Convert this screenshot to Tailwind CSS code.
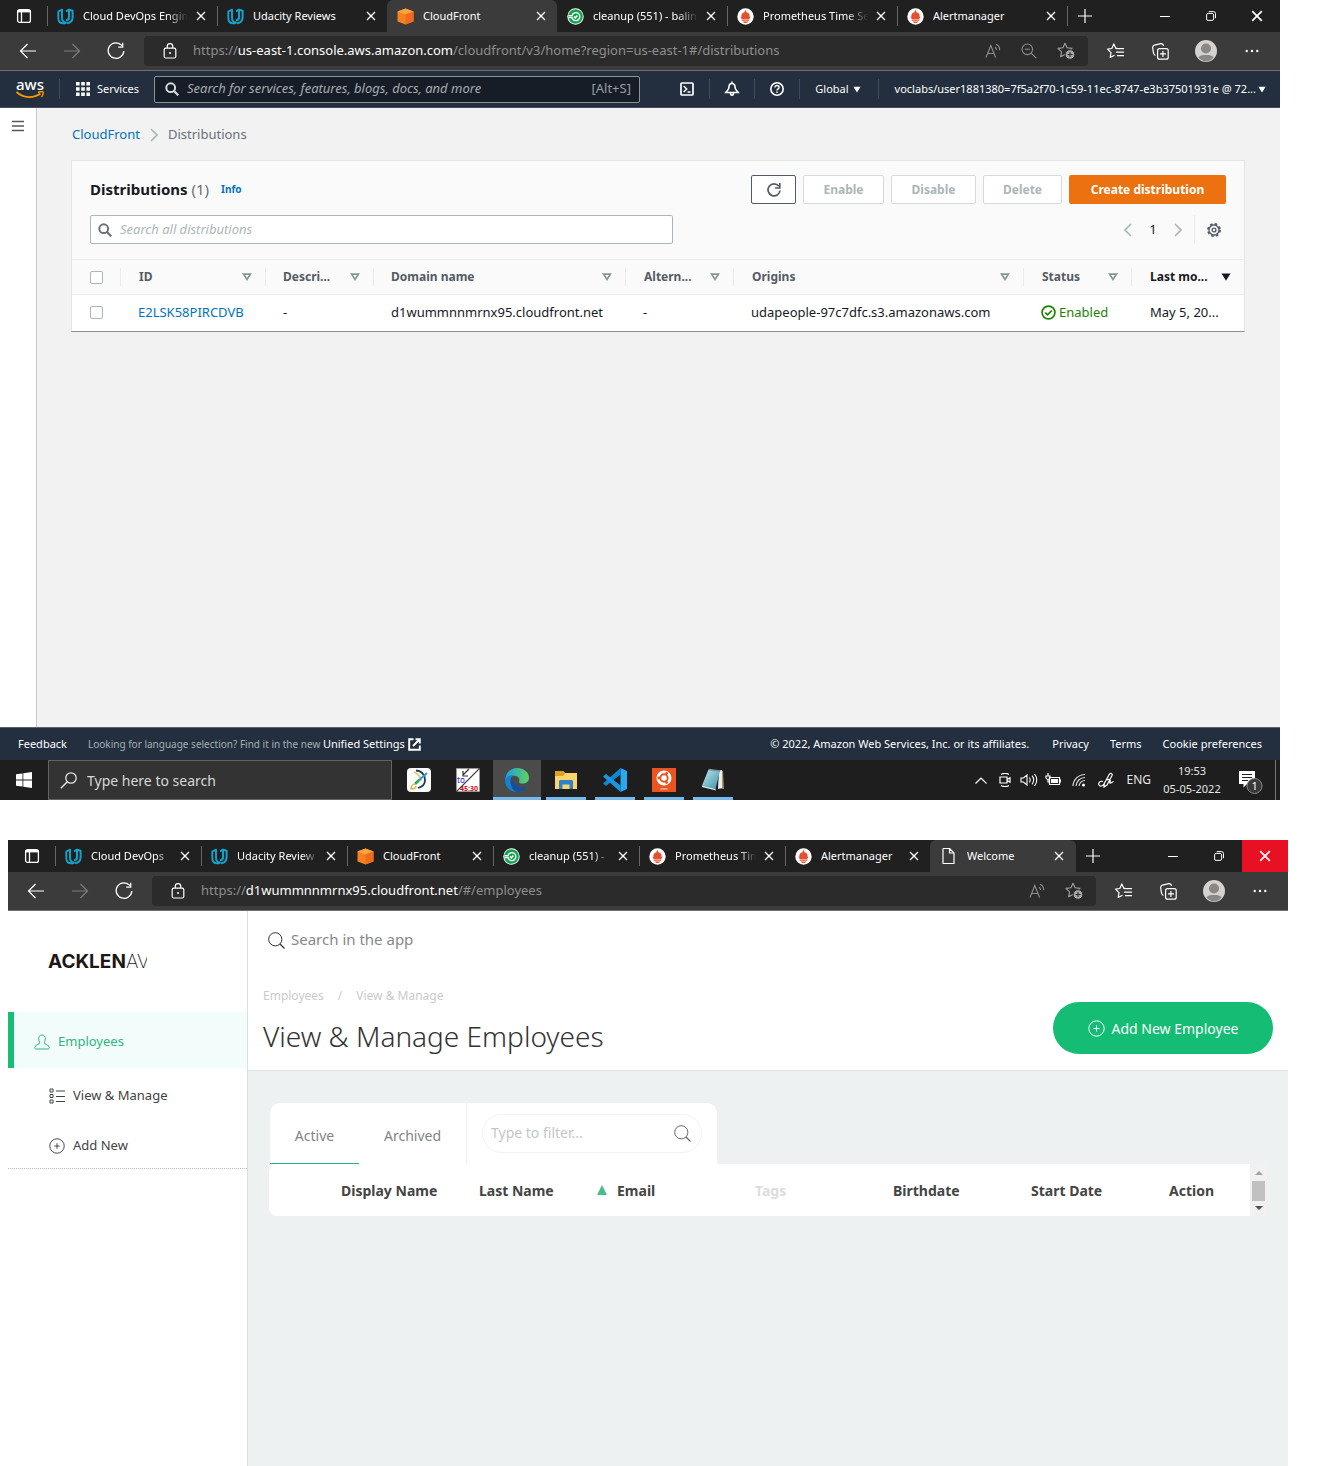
<!DOCTYPE html>
<html lang="en">
<head>
<meta charset="utf-8">
<meta name="viewport" content="width=device-width, initial-scale=1">
<title>CloudFront distributions and employees app</title>
<script src="https://cdn.jsdelivr.net/npm/@tailwindcss/browser@4"></script>
</head>
<body class="flex min-h-screen flex-col gap-10 bg-white font-['Noto_Sans',sans-serif]">

<!-- Shared icons -->
<svg class="absolute size-0" aria-hidden="true">
  <defs>
    <linearGradient id="edge-a" x1="0" y1="0" x2="1" y2="0"><stop offset="0" stop-color="#1b9de2"/><stop offset="1" stop-color="#5fd45b"/></linearGradient>
    <linearGradient id="pad-a" x1="0" y1="0" x2="1" y2="1"><stop offset="0" stop-color="#bfe6ee"/><stop offset="1" stop-color="#3b93a8"/></linearGradient>
  </defs>
  <symbol id="i-tabs" viewBox="0 0 16 16"><rect x="1.6" y="1.6" width="12.8" height="12.8" rx="2" fill="none" stroke="#fff" stroke-width="1.3"/><path d="M5.500 4v10.400" stroke="#fff" stroke-width="1.3"/><path d="M2 2h12v2.400H2z" fill="#fff"/></symbol>
  <symbol id="i-udacity" viewBox="0 0 17 17"><path d="M5 1.600 1.300 3.500v6.300c0 3.600 2 5.600 5 5.600 1 0 1.900-.2 2.700-.7-2.600-.6-4-2.500-4-5.300z" fill="none" stroke="#15a3cc" stroke-width="1.900" stroke-linejoin="round"/><path d="M9 3.300 12 1.600v7.300c0 2.300-1.600 3.300-3 3.300M12 1.800l3.600 1v6.400c0 3.600-2.600 5.600-5.600 6" fill="none" stroke="#15a3cc" stroke-width="2" stroke-linejoin="round"/></symbol>
  <symbol id="i-cube" viewBox="0 0 17 17"><path d="M8.500.5 16.500 3.500v10l-8 3-8-3v-10z" fill="#f58220"/><path d="m.5 3.500 8 3 8-3-8-3z" fill="#fca43c"/><path d="m8.500 6.500 8-3v10l-8 3z" fill="#ee6a1c"/></symbol>
  <symbol id="i-circleci" viewBox="0 0 17 17"><circle cx="8.500" cy="8.500" r="8.200" fill="#fff"/><circle cx="8.500" cy="8.500" r="7.300" fill="#12a150"/><path d="M1.500 7.700H5a4 4 0 1 1 0 1.800H1.500" fill="none" stroke="#fff" stroke-width="1.300"/><path d="m7 8.500 1.400 1.300 2-2.400" fill="none" stroke="#fff" stroke-width="1.500"/></symbol>
  <symbol id="i-prom" viewBox="0 0 17 17"><circle cx="8.500" cy="8.500" r="8.200" fill="#fff"/><path d="M8.500 1.800c.4 1.600 1.500 2 1.500 3.700.6-.4.700-1 .7-1.500 1.400 1.800 2.200 3 1.900 4.900l.9-.4c-.2 1-.7 1.700-1.300 2.400H4.800c-.6-.7-1.100-1.400-1.300-2.400l.9.400c-.3-1.900.5-3.100 1.900-4.900 0 .5.1 1.100.7 1.500 0-1.700 1.100-2.100 1.500-3.700zM4.600 11.600h7.800v1.200H4.600zM5.800 13.500h5.400c-.5 1-1.500 1.500-2.700 1.500s-2.200-.5-2.700-1.500z" fill="#e2502e"/></symbol>
  <symbol id="i-page" viewBox="0 0 16 18"><path d="M2 1.500h6.500l4.500 4.500v10.500H2zM8.500 1.500V6H13" fill="none" stroke="#fff" stroke-width="1.200" stroke-linejoin="round"/></symbol>
  <symbol id="i-x" viewBox="0 0 10 10"><path d="m1 1 8 8M9 1 1 9" stroke="currentColor" stroke-width="1.400" fill="none"/></symbol>
  <symbol id="i-plus" viewBox="0 0 14 14"><path d="M7 0v14M0 7h14" stroke="#fff" stroke-width="1.200"/></symbol>
  <symbol id="i-min" viewBox="0 0 10 10"><path d="M0 5.500h10" stroke="#fff"/></symbol>
  <symbol id="i-restore" viewBox="0 0 10 10"><rect x=".6" y="2.400" width="7" height="7" rx="1.500" fill="none" stroke="#fff"/><path d="M2.800.6h4.700a2 2 0 0 1 2 2v4.600" fill="none" stroke="#fff"/></symbol>
  <symbol id="i-back" viewBox="0 0 18 16"><path d="M17 8H1.500M8.500 1l-7 7 7 7" fill="none" stroke="currentColor" stroke-width="1.200"/></symbol>
  <symbol id="i-reload" viewBox="0 0 18 18"><path d="M15 3.600A7.800 7.800 0 1 0 16.800 9" fill="none" stroke="#fff" stroke-width="1.300"/><path d="M15.700.8v4.400h-4.500" fill="none" stroke="#fff" stroke-width="1.300"/></symbol>
  <symbol id="i-lock" viewBox="0 0 14 16"><rect x="1.200" y="5.200" width="11.600" height="9.800" rx="1.500" fill="none" stroke="#fff" stroke-width="1.200"/><path d="M4.200 5V3.500a2.800 2.800 0 0 1 5.600 0V5" fill="none" stroke="#fff" stroke-width="1.200"/><circle cx="7" cy="10" r="1" fill="#fff"/></symbol>
  <symbol id="i-read" viewBox="0 0 16 16"><path d="M1 14.500 5.800 2.500l4.800 12M2.600 10.500H9M10 4.200c1 .6 1.500 1.600 1.500 2.800M11 1.200c2.400 1 3.800 3.200 3.600 6" fill="none" stroke="#8e8e8e" stroke-width="1.100"/></symbol>
  <symbol id="i-zoomout" viewBox="0 0 16 16"><circle cx="6.300" cy="6.300" r="5.300" fill="none" stroke="#8e8e8e" stroke-width="1.100"/><path d="m10.200 10.200 5 5M3.800 6.300h5" stroke="#8e8e8e" stroke-width="1.100"/></symbol>
  <symbol id="i-staradd" viewBox="0 0 18 18"><path d="m8 1.200 2.100 4.600 5 .6-3.700 3.400 1 5L8 12.400l-4.400 2.400 1-5L.9 6.400l5-.6z" fill="none" stroke="#a0a0a0" stroke-width="1.100" stroke-linejoin="round"/><circle cx="13" cy="12.500" r="4.800" fill="#a9a9a9" stroke="#2b2b2b"/><path d="M13 10v5M10.500 12.500h5" stroke="#2b2b2b" stroke-width="1.100"/></symbol>
  <symbol id="i-fav" viewBox="0 0 18 16"><path d="M9.500 5.300H8.800L6.800.9 4.800 5.500.6 6.200 4 9.700 3.200 14.500l4.300-2.300" fill="none" stroke="#fff" stroke-width="1.200" stroke-linejoin="round"/><path d="m8.700 5.300 2.500.3M10 5.700h7M9 9.200h8M10 12.700h7" stroke="#fff" stroke-width="1.200"/></symbol>
  <symbol id="i-coll" viewBox="0 0 17 17"><rect x="5.600" y="5.600" width="10.600" height="10.600" rx="2" fill="none" stroke="#fff" stroke-width="1.200"/><path d="M10.900 8v6M8 10.900h6M3.500 12.500C2 12 1.800 11 1.500 10L.7 5c-.2-1.600.6-2.600 1.800-2.900L8.700.7c1.600-.2 2.500.6 2.800 2.300" fill="none" stroke="#fff" stroke-width="1.200"/></symbol>
  <symbol id="i-avatar" viewBox="0 0 22 22"><circle cx="11" cy="11" r="11" fill="#d4d1ce"/><circle cx="11" cy="8.500" r="5" fill="#8a8785"/><path d="M3.500 17.500c1-2.300 3.500-2.500 7.500-2.500s6.500.2 7.500 2.500A10.500 10.500 0 0 1 11 21.500a10.500 10.500 0 0 1-7.500-4z" fill="#8a8785"/></symbol>
  <symbol id="i-dots" viewBox="0 0 14 4"><circle cx="1.700" cy="2" r="1.200" fill="#fff"/><circle cx="7" cy="2" r="1.200" fill="#fff"/><circle cx="12.300" cy="2" r="1.200" fill="#fff"/></symbol>
  <symbol id="i-mag" viewBox="0 0 14 14"><circle cx="5.700" cy="5.700" r="4.400" fill="none" stroke="currentColor" stroke-width="2"/><path d="m9 9 4.300 4.300" stroke="currentColor" stroke-width="2.200"/></symbol>
  <symbol id="i-thinmag" viewBox="0 0 17 17"><circle cx="7.300" cy="7.300" r="6.600" fill="none" stroke="currentColor"/><path d="m12 12 4.500 4.500" stroke="currentColor" stroke-width="1.200"/></symbol>
  <symbol id="i-winmag" viewBox="0 0 17 17"><circle cx="6" cy="6" r="5.200" fill="none" stroke="currentColor" stroke-width="1.300"/><path d="m9.700 9.700 6.500 6.500" stroke="currentColor" stroke-width="1.400"/></symbol>
  <symbol id="i-sort" viewBox="0 0 10 8"><path d="M1.600 1.200h6.800L5 6.400z" fill="none" stroke="#879596" stroke-width="1.700"/></symbol>
  <symbol id="i-down" viewBox="0 0 10 8"><path d="M.5.500h9L5 7.800z" fill="currentColor"/></symbol>
  <symbol id="i-chev" viewBox="0 0 8 14"><path d="m1 1 6 6-6 6" fill="none" stroke="currentColor" stroke-width="1.700"/></symbol>
  <symbol id="i-circleplus" viewBox="0 0 17 17"><circle cx="8.500" cy="8.500" r="7.700" fill="none" stroke="currentColor"/><path d="M8.500 5.500v6M5.500 8.500h6" stroke="currentColor"/></symbol>
</svg>

<!-- First window: AWS console -->
<section class="mr-[46px]">
  <header>
    <div class="flex h-8 items-center bg-[#202020] text-[11px] text-white">
      <button class="flex w-[47px] shrink-0 justify-center" aria-label="Tab actions"><svg class="size-4"><use href="#i-tabs"/></svg></button>
      <div class="flex h-full w-[170px] items-center pl-[10px] pr-[11px] before:mr-[9px] before:-ml-[10px] before:h-5 before:w-px before:shrink-0 before:bg-[#666]"><svg class="size-[17px] shrink-0"><use href="#i-udacity"/></svg><span class="ml-[9px] flex-1 overflow-hidden whitespace-nowrap mask-r-from-80%">Cloud DevOps Engin</span><button class="ml-2 flex" aria-label="Close tab"><svg class="size-[10px]"><use href="#i-x"/></svg></button></div>
      <div class="flex h-full w-[170px] items-center pl-[10px] pr-[11px] before:mr-[9px] before:-ml-[10px] before:h-5 before:w-px before:shrink-0 before:bg-[#666]"><svg class="size-[17px] shrink-0"><use href="#i-udacity"/></svg><span class="ml-[9px] flex-1 overflow-hidden whitespace-nowrap">Udacity Reviews</span><button class="ml-2 flex" aria-label="Close tab"><svg class="size-[10px]"><use href="#i-x"/></svg></button></div>
      <div class="flex h-full w-[170px] items-center rounded-t-md bg-[#3b3b3b] pl-[10px] pr-[11px]"><svg class="size-[17px] shrink-0"><use href="#i-cube"/></svg><span class="ml-[9px] flex-1 overflow-hidden whitespace-nowrap">CloudFront</span><button class="ml-2 flex" aria-label="Close tab"><svg class="size-[10px]"><use href="#i-x"/></svg></button></div>
      <div class="flex h-full w-[170px] items-center pl-[10px] pr-[11px]"><svg class="size-[17px] shrink-0"><use href="#i-circleci"/></svg><span class="ml-[9px] flex-1 overflow-hidden whitespace-nowrap mask-r-from-80%">cleanup (551) - balin</span><button class="ml-2 flex" aria-label="Close tab"><svg class="size-[10px]"><use href="#i-x"/></svg></button></div>
      <div class="flex h-full w-[170px] items-center pl-[10px] pr-[11px] before:mr-[9px] before:-ml-[10px] before:h-5 before:w-px before:shrink-0 before:bg-[#666]"><svg class="size-[17px] shrink-0"><use href="#i-prom"/></svg><span class="ml-[9px] flex-1 overflow-hidden whitespace-nowrap mask-r-from-80%">Prometheus Time Se</span><button class="ml-2 flex" aria-label="Close tab"><svg class="size-[10px]"><use href="#i-x"/></svg></button></div>
      <div class="flex h-full w-[170px] items-center pl-[10px] pr-[11px] before:mr-[9px] before:-ml-[10px] before:h-5 before:w-px before:shrink-0 before:bg-[#666]"><svg class="size-[17px] shrink-0"><use href="#i-prom"/></svg><span class="ml-[9px] flex-1 overflow-hidden whitespace-nowrap">Alertmanager</span><button class="ml-2 flex" aria-label="Close tab"><svg class="size-[10px]"><use href="#i-x"/></svg></button></div>
      <span class="h-5 w-px bg-[#666]"></span>
      <button class="ml-[10px]" aria-label="New tab"><svg class="size-[14px]"><use href="#i-plus"/></svg></button>
      <div class="ml-auto flex h-full shrink-0">
        <button class="flex w-[46px] items-center justify-center" aria-label="Minimize"><svg class="size-[10px]"><use href="#i-min"/></svg></button>
        <button class="flex w-[46px] items-center justify-center" aria-label="Restore"><svg class="size-[10px]"><use href="#i-restore"/></svg></button>
        <button class="flex w-[46px] items-center justify-center" aria-label="Close window"><svg class="size-3"><use href="#i-x"/></svg></button>
      </div>
    </div>
    <div class="flex h-[39px] items-center border-b border-[#6f6f6f] bg-[#3b3b3b] text-white">
      <div class="flex w-[144px] shrink-0 items-center gap-[26px] pl-[19px]">
        <button aria-label="Back"><svg class="h-4 w-[18px]"><use href="#i-back"/></svg></button>
        <button class="text-[#7d7d7d]" aria-label="Forward"><svg class="h-4 w-[18px] -scale-x-100"><use href="#i-back"/></svg></button>
        <button aria-label="Reload"><svg class="size-[18px]"><use href="#i-reload"/></svg></button>
      </div>
      <div class="flex h-[30px] min-w-0 flex-1 items-center rounded bg-[#2b2b2b] pl-[19px] pr-[13px]">
        <svg class="h-4 w-[14px] shrink-0"><use href="#i-lock"/></svg>
        <p class="ml-4 flex-1 truncate text-[13px] text-[#8f8f8f]">https://<span class="text-white">us-east-1.console.aws.amazon.com</span>/cloudfront/v3/home?region=us-east-1#/distributions</p>
        <div class="flex shrink-0 items-center gap-5">
          <svg class="size-4"><use href="#i-read"/></svg><svg class="size-4"><use href="#i-zoomout"/></svg><svg class="size-[18px]"><use href="#i-staradd"/></svg>
        </div>
      </div>
      <div class="flex shrink-0 items-center pl-[19px] pr-[21px]">
        <svg class="h-4 w-[18px]"><use href="#i-fav"/></svg><svg class="ml-[27px] size-[17px]"><use href="#i-coll"/></svg><svg class="ml-[26px] size-[22px]"><use href="#i-avatar"/></svg><svg class="ml-7 h-1 w-[14px]"><use href="#i-dots"/></svg>
      </div>
    </div>
  </header>

  <nav class="flex h-[37px] items-center border-b border-[#45505e] bg-[#232f3e] text-[11px] text-white">
    <a href="#" class="ml-4 flex w-7 shrink-0 flex-col items-center" aria-label="AWS home">
      <span class="h-3 text-[15px] font-medium leading-[10px]">aws</span>
      <svg class="h-2 w-7" viewBox="0 0 28 8"><path d="M.5 1c7 6.500 17 6.500 24 1.500" fill="none" stroke="#f90" stroke-width="1.800"/><path d="M22 1.500c2-.9 4.500-1 5-.5s0 3.500-1.500 5" fill="none" stroke="#f90" stroke-width="1.400"/></svg>
    </a>
    <span class="ml-[15px] h-5 w-px bg-[#3f4b5a]"></span>
    <a href="#" class="ml-4 flex shrink-0 items-center gap-[7px]"><svg class="size-[14px]" viewBox="0 0 14 14"><path d="M0 0h3.600v3.600H0zM5.200 0h3.600v3.600H5.200zM10.400 0H14v3.600h-3.600zM0 5.200h3.600v3.600H0zM5.200 5.200h3.600v3.600H5.200zM10.400 5.200H14v3.600h-3.600zM0 10.400h3.600V14H0zM5.200 10.400h3.600V14H5.200zM10.400 10.400H14V14h-3.600z" fill="#fff"/></svg>Services</a>
    <label class="ml-[15px] flex h-[27px] w-[486px] items-center rounded-xs border border-[#879596] bg-[#161d26] pl-[10px] pr-2 text-[#b5bdbf]">
      <svg class="size-[14px] shrink-0 text-[#d5dbdb]"><use href="#i-mag"/></svg>
      <input type="text" aria-label="Search services" class="ml-2 min-w-0 flex-1 text-[13px] italic outline-none placeholder:text-[#a5adb0]" placeholder="Search for services, features, blogs, docs, and more">
      <span class="text-[13px] text-[#959fa1]">[Alt+S]</span>
    </label>
    <div class="ml-auto flex shrink-0 items-center">
      <button aria-label="CloudShell"><svg class="size-4" viewBox="0 0 16 16"><rect x="2" y="2" width="12" height="12" rx="1" fill="none" stroke="#fff" stroke-width="1.700"/><path d="m4.700 5 3 3-3 3M8.500 11h3" fill="none" stroke="#fff" stroke-width="1.500"/></svg></button>
      <span class="mx-[14px] h-5 w-px bg-[#3f4b5a]"></span>
      <button aria-label="Notifications"><svg class="size-4" viewBox="0 0 16 16"><path d="M8 2.500C6 2.500 5 4 5 6c0 2.800-1.700 3.500-3.200 5.500h12.400C12.700 9.500 11 8.800 11 6c0-2-1-3.500-3-3.500zM8 .5v2M6.500 12c0 3 3 3 3 0" fill="none" stroke="#fff" stroke-width="1.600"/></svg></button>
      <span class="mx-[14px] h-5 w-px bg-[#3f4b5a]"></span>
      <button aria-label="Help"><svg class="size-4" viewBox="0 0 16 16"><circle cx="8" cy="8" r="6.200" fill="none" stroke="#fff" stroke-width="1.600"/><path d="M5.900 6.500c0-2.700 4.200-2.500 4.200 0 0 1.500-2.100 1.400-2.100 3M8 10.500V12" fill="none" stroke="#fff" stroke-width="1.400"/></svg></button>
      <span class="ml-[14px] h-5 w-px bg-[#3f4b5a]"></span>
      <button class="ml-[15px] flex items-center gap-1">Global <svg class="h-[7px] w-2"><use href="#i-down"/></svg></button>
      <span class="ml-[17px] h-5 w-px bg-[#3f4b5a]"></span>
      <button class="ml-4 mr-[14px] flex items-center gap-[2px]"><span>voclabs/user1881380=7f5a2f70-1c59-11ec-8747-e3b37501931e @ 72...</span><svg class="h-[7px] w-2"><use href="#i-down"/></svg></button>
    </div>
  </nav>

  <div class="flex min-h-[619px] bg-[#f2f2f2] text-[13px]">
    <aside class="w-[37px] shrink-0 border-r border-[#ccc] bg-white pl-3 pt-3">
      <button class="flex" aria-label="Open menu"><svg class="size-3" viewBox="0 0 12 12"><path d="M0 1.500h12M0 6h12M0 10.500h12" stroke="#545b64" stroke-width="1.500"/></svg></button>
    </aside>
    <main class="min-w-0 flex-1 pl-[34px] pr-[35px] pt-[17px]">
      <nav class="ml-px flex h-5 items-center"><a href="#" class="text-[#0073bb]">CloudFront</a><svg class="mx-[10px] h-[14px] w-2 text-[#aab7b8]"><use href="#i-chev"/></svg><span class="text-[#687078]">Distributions</span></nav>
      <div class="mt-[15px] border border-[#e3e6e6] border-b-[#879196] bg-[#fafafa]">
        <div class="px-[18px] pb-[15px] pt-[14px]">
          <div class="flex h-[29px] items-center">
            <h1 class="text-[15px] font-bold text-[#16191f]">Distributions <span class="font-normal text-[#687078]">(1)</span></h1>
            <a href="#" class="ml-3 text-[10px] font-bold text-[#0073bb]">Info</a>
            <div class="ml-auto flex h-full gap-[7px] text-[12px] font-bold text-[#aab7b8]">
              <button class="flex w-[45px] items-center justify-center rounded-xs border border-[#545b64] bg-white" aria-label="Refresh"><svg class="size-4" viewBox="0 0 16 16"><path d="M12.800 4.300A6 6 0 1 0 14 8.500" fill="none" stroke="#545b64" stroke-width="1.700"/><path d="M13.800 1v5H9" fill="none" stroke="#545b64" stroke-width="1.700"/></svg></button>
              <button class="w-[81px] rounded-xs border border-[#d5dbdb] bg-white">Enable</button>
              <button class="w-[85px] rounded-xs border border-[#d5dbdb] bg-white">Disable</button>
              <button class="w-[79px] rounded-xs border border-[#d5dbdb] bg-white">Delete</button>
              <button class="w-[157px] rounded-xs bg-[#ec7211] text-white">Create distribution</button>
            </div>
          </div>
          <div class="mt-[11px] flex h-[29px] items-center">
            <label class="flex h-full w-[583px] items-center rounded-xs border border-[#aab7b8] bg-white pl-[7px]">
              <svg class="size-[14px] text-[#687078]"><use href="#i-mag"/></svg>
              <input type="text" aria-label="Search all distributions" class="ml-2 flex-1 text-[13px] italic outline-none placeholder:text-[#aab7b8]" placeholder="Search all distributions">
            </label>
            <div class="ml-auto mr-[5px] flex h-full items-center text-[#aab7b8]">
              <button class="flex" aria-label="Previous page"><svg class="h-[14px] w-2 -scale-x-100"><use href="#i-chev"/></svg></button>
              <span class="w-[42px] text-center text-[#16191f]">1</span>
              <button class="flex" aria-label="Next page"><svg class="h-[14px] w-2"><use href="#i-chev"/></svg></button>
              <span class="ml-3 mr-3 h-full w-px bg-[#eaeded]"></span>
              <button class="flex" aria-label="Preferences"><svg class="size-[14px]" viewBox="0 0 14 14"><circle cx="7" cy="7" r="6.100" fill="none" stroke="#545b64" stroke-width="1.700" stroke-dasharray="2.600 2.190"/><circle cx="7" cy="7" r="5" fill="none" stroke="#545b64" stroke-width="1.400"/><circle cx="7" cy="7" r="1.900" fill="none" stroke="#545b64" stroke-width="1.400"/></svg></button>
            </div>
          </div>
        </div>
        <table class="w-full table-fixed text-left">
          <thead>
            <tr class="h-[35px] border-y border-[#eaeded] text-[12px] text-[#545b64]">
              <th class="w-12 pl-[18px]"><input type="checkbox" aria-label="Select all" class="block size-[13px] appearance-none rounded-xs border border-[#aab7b8] bg-white"></th>
              <th class="w-[145px]"><div class="flex h-[18px] items-center border-l border-[#eaeded] pl-[18px] pr-[13px]">ID<svg class="ml-auto h-2 w-[10px]"><use href="#i-sort"/></svg></div></th>
              <th class="w-[108px]"><div class="flex h-[18px] items-center border-l border-[#eaeded] pl-[17px] pr-[13px]">Descri...<svg class="ml-auto h-2 w-[10px]"><use href="#i-sort"/></svg></div></th>
              <th class="w-[252px]"><div class="flex h-[18px] items-center border-l border-[#eaeded] pl-[17px] pr-[13px]">Domain name<svg class="ml-auto h-2 w-[10px]"><use href="#i-sort"/></svg></div></th>
              <th class="w-[108px]"><div class="flex h-[18px] items-center border-l border-[#eaeded] pl-[18px] pr-[13px]">Altern...<svg class="ml-auto h-2 w-[10px]"><use href="#i-sort"/></svg></div></th>
              <th><div class="flex h-[18px] items-center border-l border-[#eaeded] pl-[18px] pr-[13px]">Origins<svg class="ml-auto h-2 w-[10px]"><use href="#i-sort"/></svg></div></th>
              <th class="w-[108px]"><div class="flex h-[18px] items-center border-l border-[#eaeded] pl-[18px] pr-[13px]">Status<svg class="ml-auto h-2 w-[10px]"><use href="#i-sort"/></svg></div></th>
              <th class="w-[113px] text-[#16191f]"><div class="flex h-[18px] items-center border-l border-[#eaeded] pl-[18px] pr-[13px]">Last mo...<svg class="ml-auto h-2 w-[10px]"><use href="#i-down"/></svg></div></th>
            </tr>
          </thead>
          <tbody>
            <tr class="h-9 bg-white text-[13px] text-[#16191f]">
              <td class="pl-[18px]"><input type="checkbox" aria-label="Select E2LSK58PIRCDVB" class="block size-[13px] appearance-none rounded-xs border border-[#aab7b8] bg-white"></td>
              <td class="pl-[18px]"><a href="#" class="text-[#0073bb]">E2LSK58PIRCDVB</a></td>
              <td class="pl-[18px]">-</td>
              <td class="pl-[18px]">d1wummnnmrnx95.cloudfront.net</td>
              <td class="pl-[18px]">-</td>
              <td class="pl-[18px]">udapeople-97c7dfc.s3.amazonaws.com</td>
              <td class="pl-[18px]"><span class="flex items-center gap-[3px] text-[#1d8102]"><svg class="size-[15px]" viewBox="0 0 15 15"><circle cx="7.500" cy="7.500" r="6.400" fill="none" stroke="currentColor" stroke-width="1.700"/><path d="m4.200 7.600 2.400 2.300 4.200-4.400" fill="none" stroke="currentColor" stroke-width="1.700"/></svg>Enabled</span></td>
              <td class="pl-[19px]">May 5, 20...</td>
            </tr>
          </tbody>
        </table>
      </div>
    </main>
  </div>

  <footer>
    <div class="flex h-[33px] items-center border-t border-[#59636f] bg-[#232f3e] pl-[18px] pr-[18px] text-[11px] text-white">
      <a href="#">Feedback</a>
      <p class="ml-[21px] text-[10px] text-[#a3afb5]">Looking for language selection? Find it in the new <a href="#" class="text-[11px] text-white">Unified Settings</a></p>
      <svg class="ml-[3px] size-[13px]" viewBox="0 0 13 13"><path d="M5.500 1.200H1.200v10.600h10.600V7.500M7.500 1.200h4.300v4.300M11.500 1.500 5 8" fill="none" stroke="#fff" stroke-width="1.900"/></svg>
      <span class="ml-auto">© 2022, Amazon Web Services, Inc. or its affiliates.</span>
      <a href="#" class="ml-[23px]">Privacy</a><a href="#" class="ml-[21px]">Terms</a><a href="#" class="ml-[21px]">Cookie preferences</a>
    </div>
    <div class="flex h-10 items-center bg-[#1e1e1e] text-[#e6e6e6]">
      <button class="flex w-12 shrink-0 justify-center" aria-label="Start"><svg class="size-4" viewBox="0 0 16 16"><path d="M0 2.300 6.500 1.400v6.200H0zM7.300 1.300 16 0v7.600H7.300zM0 8.400h6.500v6.200L0 13.700zM7.300 8.400H16V16l-8.700-1.300z" fill="#fff"/></svg></button>
      <label class="flex h-full w-[344px] items-center border border-[#636363] bg-[#333] pl-[11px]">
        <svg class="size-[17px] -scale-x-100"><use href="#i-winmag"/></svg>
        <input type="text" aria-label="Windows search" class="ml-[10px] flex-1 text-[14px] outline-none placeholder:text-[#d8d8d8]" placeholder="Type here to search">
      </label>
      <div class="ml-[2px] flex h-full">
        <button class="flex w-[49px] items-center justify-center" aria-label="Drawing app"><svg class="size-6" viewBox="0 0 24 24"><rect width="24" height="24" rx="4" fill="#fbfcfa"/><path d="M9 2.500c5 0 9 4 9 9.500 0 4-3 7-7 8" fill="none" stroke="#17395c" stroke-width="1.800"/><path d="M7 4c4 2 7 5 7 9" fill="none" stroke="#e0c860" stroke-width="1.500"/><path d="m20 5-11 10" stroke="#2f97e0" stroke-width="2"/><path d="m12 12-4 4" stroke="#35a853" stroke-width="2.500"/><path d="M8 16c-2 0-4 2-4 5 3 0 5-1 5-3" fill="none" stroke="#d8b84a" stroke-width="1.500"/></svg></button>
        <button class="flex w-[49px] items-center justify-center" aria-label="Converter"><svg class="size-6" viewBox="0 0 24 24"><path d="M.5.500h23v23H.5z" fill="#fff" stroke="#999"/><path d="M0 24 24 0M13 1 7 7M7 3v5h5" fill="none" stroke="#333" stroke-width="1.200"/><text x="1" y="15" font-size="8" fill="#2020d0">to</text><text x="4" y="23" font-size="7" font-weight="bold" fill="#d01020">45:30</text></svg></button>
        <button class="relative flex w-[49px] items-center justify-center" aria-label="Edge"><span class="absolute inset-y-0 w-12 border-b-3 border-[#76b9ed] bg-[#4b4b4b]"></span><svg class="relative size-6" viewBox="0 0 24 24"><path d="M.2 12C.5 5 5.500 0 12 0c7 0 12 4.500 12 9.500 0 4-3 6-6.500 6-2.700 0-4-1-3.500-2 1-1.500.5-5.500-4.500-5.800C5 7.500 1.500 9 .2 12z" fill="url(#edge-a)"/><path d="M.1 12C1 8.500 4.500 6.800 8.500 7.200 5.500 9 5 12 5.500 15c.8 4.500 5 7.500 9.500 7.500l1 .8C8 26 0 21 .1 12z" fill="#1482d2"/><path d="M8 9.500c-1 3.500 2 9.500 9 9.500 2 0 3.500-.4 4.800-1-1.800 3.500-5.300 6-9.800 6-5.500-1-8-9-4-14.500z" fill="#174f9c"/></svg></button>
        <button class="relative flex w-[49px] items-center justify-center" aria-label="File Explorer"><span class="absolute bottom-0 h-[3px] w-10 bg-[#76b9ed]"></span><svg class="size-[22px]" viewBox="0 0 22 22"><path d="M0 2h8l2 2h12v16H0z" fill="#fbd36b"/><path d="M0 2h8l2 2.500L8 7H0z" fill="#dfa21f"/><path d="M4 20v-7.500c0-1 .7-1.500 1.500-1.500h11c.8 0 1.500.5 1.500 1.500V20h-3.500v-4.500h-7V20z" fill="#2f82c8"/></svg></button>
        <button class="relative flex w-[49px] items-center justify-center" aria-label="Visual Studio Code"><span class="absolute bottom-0 h-[3px] w-10 bg-[#76b9ed]"></span><svg class="size-6" viewBox="0 0 24 24"><path d="M17.500 0 24 3v18l-6.500 3z" fill="#29a8f0"/><path d="M17.500 0v6.500L3 18 0 15.500z" fill="#1584cf"/><path d="M17.500 24v-6.500L3 6 0 8.500z" fill="#1c95df"/></svg></button>
        <button class="relative flex w-[49px] items-center justify-center" aria-label="Ubuntu"><span class="absolute bottom-0 h-[3px] w-10 bg-[#76b9ed]"></span><svg class="size-6" viewBox="0 0 24 24"><path d="M0 0h24v24H0z" fill="#e95420"/><circle cx="12" cy="10" r="7.500" fill="#fff"/><circle cx="12" cy="10" r="3.700" fill="none" stroke="#e95420" stroke-width="1.900"/><circle cx="6.800" cy="10" r="1.400" fill="#e95420"/><circle cx="14.600" cy="5.500" r="1.400" fill="#e95420"/><circle cx="14.600" cy="14.500" r="1.400" fill="#e95420"/><path d="M8.500 21h7" stroke="#f6b09a" stroke-width="1.500"/></svg></button>
        <button class="relative flex w-[49px] items-center justify-center" aria-label="Notepad"><span class="absolute bottom-0 h-[3px] w-10 bg-[#76b9ed]"></span><svg class="size-6" viewBox="0 0 24 24"><path d="m19 2 3 1 1 18-6-1z" fill="#a58f68"/><path d="m18 3 3-1v18l-4 1z" fill="#ececec"/><path d="M7.500 1.500 19 3l-4.500 18L1 17.500z" fill="url(#pad-a)"/><path d="m1 17.500 13.500 3.500.5 1.500L1 19z" fill="#dfeff2"/><path d="m8 1.500 11 1.600" stroke="#7d8f93" stroke-width="1.500"/></svg></button>
      </div>
      <div class="ml-auto flex h-full shrink-0 items-center">
        <svg class="h-[7px] w-3" viewBox="0 0 12 7"><path d="m.5 6.500 5.500-5.500 5.500 5.500" fill="none" stroke="#fff" stroke-width="1.200"/></svg>
        <svg class="ml-[11px] size-[14px]" viewBox="0 0 14 14"><path d="M3 1.500C5 0 9 0 11 1.500M3 12.500c2 1.500 6 1.500 8 0M2 4h7v6H2zM9 6.500l3-1.800v4.600L9 7.500" fill="none" stroke="#fff" stroke-width="1.200"/></svg>
        <svg class="ml-2 h-[14px] w-[18px]" viewBox="0 0 18 14"><path d="M1 5h2.500L7 2v10L3.500 9H1zM9.500 4.500c1 1.500 1 3.500 0 5M12 2.700c2 2.500 2 6 0 8.600M14.500 1c3 3.500 3 8.500 0 12" fill="none" stroke="#fff" stroke-width="1.100"/></svg>
        <svg class="ml-[7px] h-[14px] w-4" viewBox="0 0 16 14"><path d="M4.500 4.500h10v7h-10zM3 0v3M1 3h4v2C4 7 2 7 1 5zM3 6.500V9h1.500" fill="none" stroke="#fff" stroke-width="1.200"/><path d="M6 6h7v4H6z" fill="#fff"/><path d="M15 6.500h1v3h-1z" fill="#fff"/></svg>
        <svg class="ml-[11px] size-[14px]" viewBox="0 0 14 14"><path d="M1 13A12 12 0 0 1 13 1.500M4 13a9 9 0 0 1 9-8.500M7 13a6 6 0 0 1 6-5.500" fill="none" stroke="#ddd" stroke-width="1.200"/><circle cx="11.500" cy="12" r="1.500" fill="#fff"/></svg>
        <svg class="ml-3 size-4" viewBox="0 0 16 16"><path d="M5 9.500c-3-1-5 1.500-4 3.500s4 1 5-1L11.500 2c1-1.500 3.300-.3 2.500 1.500L9 13l-3 2 .3-3.500M9 8c2-1.500 4 0 3 2s1 1 3.500-.5" fill="none" stroke="#fff" stroke-width="1.200"/></svg>
        <span class="ml-3 text-[12px]">ENG</span>
        <p class="ml-[9px] w-[64px] text-center text-[11px] leading-[18px]">19:53<br>05-05-2022</p>
        <svg class="ml-[14px] h-7 w-[26px]" viewBox="0 0 26 28"><path d="M1 5h16v13H9l-3.500 3.500V18H1z" fill="#fff"/><path d="M4 8.500h10M4 11.500h10M4 14.500h6" stroke="#1e1e1e"/><circle cx="16.500" cy="20" r="7.500" fill="#383838" stroke="#8c8c8c"/><text x="13.500" y="24" font-size="11" fill="#fff">1</text></svg>
        <span class="ml-[11px] mr-1 h-full w-px bg-[#777]"></span>
      </div>
    </div>
  </footer>
</section>

<!-- Second window: employees app -->
<section class="ml-2 mr-[38px] flex flex-1 flex-col">
  <header>
    <div class="flex h-8 items-center bg-[#202020] text-[11px] text-white">
      <button class="flex w-[47px] shrink-0 justify-center" aria-label="Tab actions"><svg class="size-4"><use href="#i-tabs"/></svg></button>
      <div class="flex h-full w-[146px] items-center pl-[10px] pr-[11px] before:mr-[9px] before:-ml-[10px] before:h-5 before:w-px before:shrink-0 before:bg-[#666]"><svg class="size-[17px] shrink-0"><use href="#i-udacity"/></svg><span class="ml-[9px] flex-1 overflow-hidden whitespace-nowrap mask-r-from-80%">Cloud DevOps</span><button class="ml-2 flex" aria-label="Close tab"><svg class="size-[10px]"><use href="#i-x"/></svg></button></div>
      <div class="flex h-full w-[146px] items-center pl-[10px] pr-[11px] before:mr-[9px] before:-ml-[10px] before:h-5 before:w-px before:shrink-0 before:bg-[#666]"><svg class="size-[17px] shrink-0"><use href="#i-udacity"/></svg><span class="ml-[9px] flex-1 overflow-hidden whitespace-nowrap mask-r-from-80%">Udacity Review</span><button class="ml-2 flex" aria-label="Close tab"><svg class="size-[10px]"><use href="#i-x"/></svg></button></div>
      <div class="flex h-full w-[146px] items-center pl-[10px] pr-[11px] before:mr-[9px] before:-ml-[10px] before:h-5 before:w-px before:shrink-0 before:bg-[#666]"><svg class="size-[17px] shrink-0"><use href="#i-cube"/></svg><span class="ml-[9px] flex-1 overflow-hidden whitespace-nowrap">CloudFront</span><button class="ml-2 flex" aria-label="Close tab"><svg class="size-[10px]"><use href="#i-x"/></svg></button></div>
      <div class="flex h-full w-[146px] items-center pl-[10px] pr-[11px] before:mr-[9px] before:-ml-[10px] before:h-5 before:w-px before:shrink-0 before:bg-[#666]"><svg class="size-[17px] shrink-0"><use href="#i-circleci"/></svg><span class="ml-[9px] flex-1 overflow-hidden whitespace-nowrap mask-r-from-80%">cleanup (551) -</span><button class="ml-2 flex" aria-label="Close tab"><svg class="size-[10px]"><use href="#i-x"/></svg></button></div>
      <div class="flex h-full w-[146px] items-center pl-[10px] pr-[11px] before:mr-[9px] before:-ml-[10px] before:h-5 before:w-px before:shrink-0 before:bg-[#666]"><svg class="size-[17px] shrink-0"><use href="#i-prom"/></svg><span class="ml-[9px] flex-1 overflow-hidden whitespace-nowrap mask-r-from-80%">Prometheus Tim</span><button class="ml-2 flex" aria-label="Close tab"><svg class="size-[10px]"><use href="#i-x"/></svg></button></div>
      <div class="flex h-full w-[145px] items-center pl-[10px] pr-[11px] before:mr-[9px] before:-ml-[10px] before:h-5 before:w-px before:shrink-0 before:bg-[#666]"><svg class="size-[17px] shrink-0"><use href="#i-prom"/></svg><span class="ml-[9px] flex-1 overflow-hidden whitespace-nowrap">Alertmanager</span><button class="ml-2 flex" aria-label="Close tab"><svg class="size-[10px]"><use href="#i-x"/></svg></button></div>
      <div class="flex h-full w-[146px] items-center rounded-t-md bg-[#3b3b3b] pl-[11px] pr-3"><svg class="h-[18px] w-4 shrink-0"><use href="#i-page"/></svg><span class="ml-[10px] flex-1 overflow-hidden whitespace-nowrap">Welcome</span><button class="ml-2 flex" aria-label="Close tab"><svg class="size-[10px]"><use href="#i-x"/></svg></button></div>
      <button class="ml-[10px]" aria-label="New tab"><svg class="size-[14px]"><use href="#i-plus"/></svg></button>
      <div class="ml-auto flex h-full shrink-0">
        <button class="flex w-[46px] items-center justify-center" aria-label="Minimize"><svg class="size-[10px]"><use href="#i-min"/></svg></button>
        <button class="flex w-[46px] items-center justify-center" aria-label="Restore"><svg class="size-[10px]"><use href="#i-restore"/></svg></button>
        <button class="flex w-[46px] items-center justify-center bg-[#e81123]" aria-label="Close window"><svg class="size-3"><use href="#i-x"/></svg></button>
      </div>
    </div>
    <div class="flex h-[39px] items-center border-b border-[#6f6f6f] bg-[#3b3b3b] text-white">
      <div class="flex w-[144px] shrink-0 items-center gap-[26px] pl-[19px]">
        <button aria-label="Back"><svg class="h-4 w-[18px]"><use href="#i-back"/></svg></button>
        <button class="text-[#7d7d7d]" aria-label="Forward"><svg class="h-4 w-[18px] -scale-x-100"><use href="#i-back"/></svg></button>
        <button aria-label="Reload"><svg class="size-[18px]"><use href="#i-reload"/></svg></button>
      </div>
      <div class="flex h-[30px] min-w-0 flex-1 items-center rounded bg-[#2b2b2b] pl-[19px] pr-[13px]">
        <svg class="h-4 w-[14px] shrink-0"><use href="#i-lock"/></svg>
        <p class="ml-4 flex-1 truncate text-[13px] text-[#8f8f8f]">https://<span class="text-white">d1wummnnmrnx95.cloudfront.net</span>/#/employees</p>
        <div class="flex shrink-0 items-center gap-5">
          <svg class="size-4"><use href="#i-read"/></svg><svg class="size-[18px]"><use href="#i-staradd"/></svg>
        </div>
      </div>
      <div class="flex shrink-0 items-center pl-[19px] pr-[21px]">
        <svg class="h-4 w-[18px]"><use href="#i-fav"/></svg><svg class="ml-[27px] size-[17px]"><use href="#i-coll"/></svg><svg class="ml-[26px] size-[22px]"><use href="#i-avatar"/></svg><svg class="ml-7 h-1 w-[14px]"><use href="#i-dots"/></svg>
      </div>
    </div>
  </header>

  <div class="flex flex-1">
    <aside class="w-60 shrink-0 border-r border-[#dcdfe0] text-[13px] text-[#3f4244]">
      <div class="flex h-[101px] items-center pl-10">
        <div class="w-[99px] overflow-hidden whitespace-nowrap font-['Inter',sans-serif] text-[19px] leading-6 text-[#1d1716]"><span class="font-bold">ACKLEN</span><span class="font-extralight">AV</span></div>
      </div>
      <a href="#" class="flex h-14 items-center border-l-6 border-[#14bf74] bg-[#f2fcfa] pl-5 pt-[3px] text-[#2fb57f]"><svg class="mr-2 size-4" viewBox="0 0 16 16"><path d="M8 1C5.500 1 4.500 3 4.700 5c.1 2 1 2.700 1 4 0 1.500-4.900 1.500-4.900 4.500 0 1 .4 1.500 1.200 1.500h12c.8 0 1.200-.5 1.200-1.500 0-3-4.900-3-4.900-4.500 0-1.300.9-2 1-4C11.500 3 10.500 1 8 1z" fill="none" stroke="currentColor"/></svg>Employees</a>
      <a href="#" class="flex h-[52px] items-center pl-[41px] pt-[3px]"><svg class="mr-2 size-4" viewBox="0 0 16 16"><path d="M1 1h3v3H1zM1 6.500h3v3H1zM1 12h3v3H1zM7 3h9M7 8.500h9M7 13.500h9" fill="none" stroke="currentColor"/></svg>View &amp; Manage</a>
      <a href="#" class="flex h-12 items-center pl-[41px] pt-[3px]"><svg class="mr-2 size-4"><use href="#i-circleplus"/></svg>Add New</a>
      <div class="border-b border-dotted border-[#bbb]"></div>
    </aside>
    <main class="flex min-w-0 flex-1 flex-col bg-[#edf1f2]">
      <div class="h-40 border-b border-[#dfe3e4] bg-white pl-[15px] pr-[15px]">
        <label class="ml-[5px] flex h-[59px] items-center"><svg class="size-[17px] text-[#333]"><use href="#i-thinmag"/></svg><input type="text" aria-label="Search in the app" class="ml-[6px] w-60 pb-[2px] text-[15px] outline-none placeholder:text-[#85898b]" placeholder="Search in the app"></label>
        <div class="flex items-end justify-between">
          <div>
            <nav class="mt-4 flex h-5 items-center text-[12px] text-[#c9cbcc]"><a href="#">Employees</a><span class="mx-[14px]">/</span><span>View &amp; Manage</span></nav>
            <h1 class="mt-3 text-[28px] font-light leading-9 text-[#333]">View &amp; Manage Employees</h1>
          </div>
          <button class="flex h-[52px] w-[220px] items-center justify-center gap-[7px] rounded-full bg-[#14bc74] text-[14px] text-white"><svg class="size-[17px]"><use href="#i-circleplus"/></svg>Add New Employee</button>
        </div>
      </div>
      <div class="pl-[21px] pr-[21px] pt-8">
        <div class="ml-px flex h-[61px] w-[447px] rounded-t-[10px] bg-white text-[14px] text-[#7f8486]">
          <button class="w-[89px] border-b border-[#2fae8a] pt-1">Active</button>
          <button class="w-[107px] pt-[3px]">Archived</button>
          <label class="flex h-full flex-1 items-center border-l border-[#f1f3f3] pl-[15px]">
            <span class="flex h-[39px] w-[220px] items-center rounded-full border border-[#f1f3f3] pl-2 pr-[10px]"><input type="text" aria-label="Type to filter" class="min-w-0 flex-1 pb-[3px] outline-none placeholder:text-[#c3c6c7]" placeholder="Type to filter..."><svg class="size-[17px] text-[#666]"><use href="#i-thinmag"/></svg></span>
          </label>
        </div>
        <div class="flex">
          <div class="min-w-0 flex-1 rounded-l-lg bg-white pl-[52px]">
            <table class="w-full table-fixed text-left text-[14px] text-[#444]">
              <thead>
                <tr class="h-[52px]"><th class="w-[138px] pl-5">Display Name</th><th class="w-[138px] pl-5">Last Name</th><th class="w-[138px]"><span class="flex items-center"><svg class="mr-[10px] size-[10px]" viewBox="0 0 10 10"><path d="M5 0l5 10H0z" fill="#47bd8b"/></svg>Email</span></th><th class="w-[138px] pl-5 text-[#dcdddd]">Tags</th><th class="w-[138px] pl-5">Birthdate</th><th class="w-[138px] pl-5">Start Date</th><th class="pl-5">Action</th></tr>
              </thead>
            </table>
          </div>
          <div class="flex w-[17px] flex-col items-center bg-[#f1f1f1] pt-[7px]">
            <svg class="h-1 w-2" viewBox="0 0 8 4"><path d="M4 0l4 4H0z" fill="#a3a3a3"/></svg>
            <span class="mt-[6px] h-5 w-[13px] bg-[#c1c1c1]"></span>
            <svg class="mt-[5px] h-1 w-2" viewBox="0 0 8 4"><path d="M0 0h8L4 4z" fill="#505050"/></svg>
          </div>
        </div>
      </div>
    </main>
  </div>
</section>
</body>
</html>
